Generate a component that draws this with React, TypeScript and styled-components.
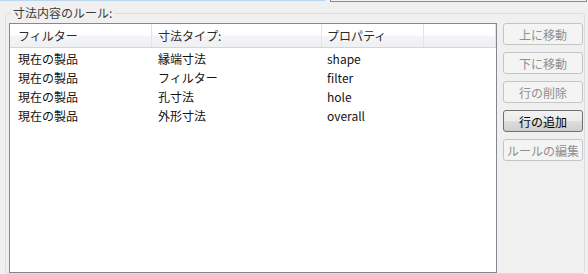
import React from 'react';
import styled, { createGlobalStyle } from 'styled-components';

const GlobalStyle = createGlobalStyle`
  html, body {
    margin: 0;
    padding: 0;
    background: #f0f0f0;
  }
  body {
    font-family: "Noto Sans CJK JP", "Noto Sans", sans-serif;
    font-size: 12px;
    color: #111;
  }
`;

const Window = styled.div`
  width: 588px;
  height: 274px;
  overflow: hidden;
  background: #f0f0f0;
`;

const TabStrip = styled.div`
  display: flex;
  height: 3px;
`;

const TabEdge = styled.div`
  width: 325px;
  border-top: 1px solid #b9d6ee;
`;

const TabBox = styled.div`
  flex: 1;
  margin-left: 5px;
  margin-right: 1px;
  height: 1px;
  border: 1px solid #8c8e92;
  border-top: none;
`;

const GroupBox = styled.div`
  margin: 10px 3px 0 5px;
  height: 259px;
  border: 1px solid #d5dfe5;
  border-radius: 3px;
  display: flex;
  flex-direction: column;
`;

const GroupLabel = styled.div`
  width: fit-content;
  height: 14px;
  line-height: 14px;
  margin: -8px 0 0 5px;
  padding: 0 2px;
  background: #f0f0f0;
  color: #3a3a3a;
`;

const GroupBody = styled.div`
  flex: 1;
  display: flex;
  gap: 6px;
  padding: 3px 1px 0 3px;
  min-height: 0;
`;

const ListView = styled.div`
  width: 486px;
  height: 248px;
  border: 1px solid #828790;
  background: #fff;
  display: flex;
  flex-direction: column;
`;

const columns = '142px 170px 102px 1fr';

const HeaderRow = styled.div`
  display: grid;
  grid-template-columns: ${columns};
  height: 23px;
  border-bottom: 1px solid #d5d5d5;
  background: linear-gradient(#ffffff 0%, #ffffff 45%, #f3f4f6 55%, #eff0f2 100%);
`;

const HeaderCell = styled.div<{ $pad: number }>`
  padding-left: ${({ $pad }) => $pad}px;
  line-height: 23px;
  color: #2a2a2a;
  border-right: 1px solid #e3e4e6;
  white-space: nowrap;
`;

const Rows = styled.div`
  padding-top: 1px;
`;

const Row = styled.div`
  display: grid;
  grid-template-columns: ${columns};
  height: 19px;
  line-height: 19px;
`;

const Cell = styled.div<{ $pad: number }>`
  padding-left: ${({ $pad }) => $pad}px;
  white-space: nowrap;
`;

const ButtonColumn = styled.div`
  display: flex;
  flex-direction: column;
  gap: 7px;
  width: 80px;
`;

const ActionButton = styled.button<{ $enabled?: boolean }>`
  height: 22px;
  width: 80px;
  padding: 0;
  font-family: inherit;
  font-size: 12px;
  border-radius: 3px;
  border: 1px solid ${({ $enabled }) => ($enabled ? '#707070' : '#c5c5c5')};
  color: ${({ $enabled }) => ($enabled ? '#000' : '#8f8f8f')};
  background: ${({ $enabled }) =>
    $enabled
      ? 'linear-gradient(#f2f2f2 0%, #ebebeb 48%, #dddddd 52%, #cfcfcf 100%)'
      : '#f4f4f4'};
  white-space: nowrap;
`;

const pads = [8, 6, 5, 5];

const headers = ['フィルター', '寸法タイプ:', 'プロパティ', ''];

const rows = [
  ['現在の製品', '縁端寸法', 'shape'],
  ['現在の製品', 'フィルター', 'filter'],
  ['現在の製品', '孔寸法', 'hole'],
  ['現在の製品', '外形寸法', 'overall'],
];

const buttons = [
  { label: '上に移動', enabled: false },
  { label: '下に移動', enabled: false },
  { label: '行の削除', enabled: false },
  { label: '行の追加', enabled: true },
  { label: 'ルールの編集', enabled: false },
];

const App: React.FC = () => {
  return (
    <Window>
      <GlobalStyle />
      <TabStrip>
        <TabEdge />
        <TabBox />
      </TabStrip>
      <GroupBox>
        <GroupLabel>寸法内容のルール:</GroupLabel>
        <GroupBody>
          <ListView>
            <HeaderRow>
              {headers.map((h, i) => (
                <HeaderCell key={i} $pad={pads[i]}>
                  {h}
                </HeaderCell>
              ))}
            </HeaderRow>
            <Rows>
              {rows.map((r, i) => (
                <Row key={i}>
                  {r.map((c, j) => (
                    <Cell key={j} $pad={pads[j]}>
                      {c}
                    </Cell>
                  ))}
                </Row>
              ))}
            </Rows>
          </ListView>
          <ButtonColumn>
            {buttons.map((b) => (
              <ActionButton key={b.label} $enabled={b.enabled} disabled={!b.enabled}>
                {b.label}
              </ActionButton>
            ))}
          </ButtonColumn>
        </GroupBody>
      </GroupBox>
    </Window>
  );
};

export default App;
